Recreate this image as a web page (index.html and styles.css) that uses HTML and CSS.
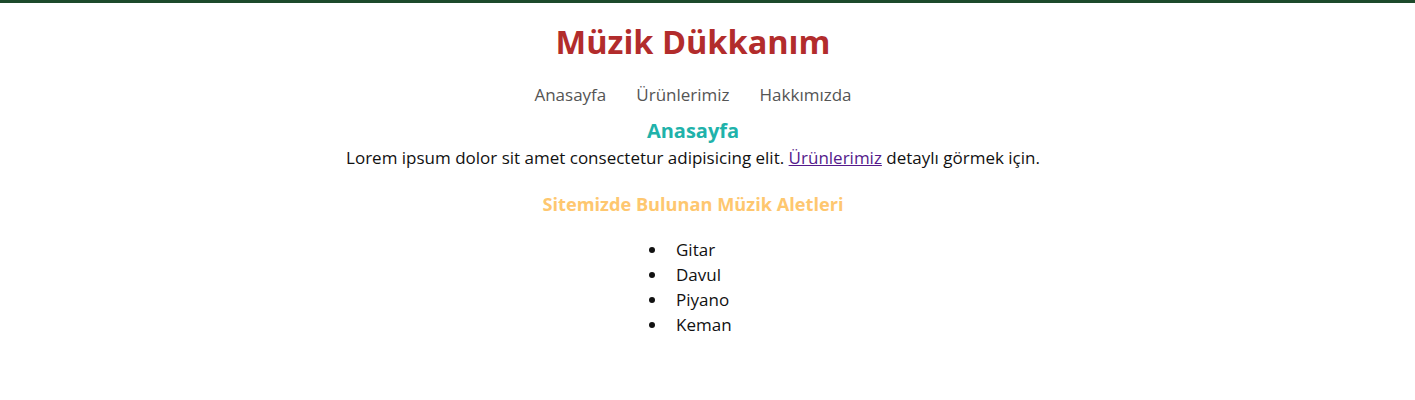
FILE: index.html
```html
<!DOCTYPE html>
<html lang="tr">
<head>
<meta charset="utf-8">
<title>Müzik Dükkanım</title>
<link rel="stylesheet" href="styles.css">
</head>
<body>
<div class="page">
<header class="site-header">
  <h1 class="site-title">Müzik Dükkanım</h1>
  <nav class="main-nav">
    <a class="nav-link" href="#">Anasayfa</a>
    <a class="nav-link" href="#">Ürünlerimiz</a>
    <a class="nav-link" href="#">Hakkımızda</a>
  </nav>
</header>
<main class="content">
  <h2 class="page-title">Anasayfa</h2>
  <p class="intro">Lorem ipsum dolor sit amet consectetur adipisicing elit. <a class="inline-link" href="#">Ürünlerimiz</a> detaylı görmek için.</p>
  <h3 class="section-title">Sitemizde Bulunan Müzik Aletleri</h3>
  <ul class="instrument-list">
    <li class="instrument">Gitar</li>
    <li class="instrument">Davul</li>
    <li class="instrument">Piyano</li>
    <li class="instrument">Keman</li>
  </ul>
</main>
</div>
</body>
</html>
```

FILE: styles.css
```css
html, body {
  margin: 0;
  padding: 0;
  background: #ffffff;
}
body {
  border-top: 3px solid #1d4a2b;
  font-family: "Open Sans", "DejaVu Sans", sans-serif;
  color: #111;
  font-size: 17px;
}
.page {
  padding-right: 29px;
}
.site-header {
  display: flex;
  flex-direction: column;
  align-items: center;
}
.site-title {
  margin: 15px 0 0;
  font-size: 32.5px;
  line-height: 48px;
  font-weight: 700;
  color: #b22c2c;
}
.main-nav {
  display: flex;
  gap: 30px;
  margin-top: 17px;
}
.nav-link {
  color: #555;
  text-decoration: none;
  font-size: 17px;
  line-height: 24px;
}
.content {
  display: flex;
  flex-direction: column;
  align-items: center;
}
.page-title {
  margin: 12px 0 0;
  font-size: 20px;
  line-height: 24px;
  font-weight: 700;
  color: #20b2aa;
}
.intro {
  margin: 3px 0 0;
  font-size: 17px;
  line-height: 24px;
}
.inline-link {
  color: #551a8b;
}
.section-title {
  margin: 22px 0 0;
  font-size: 18.2px;
  line-height: 24px;
  font-weight: 700;
  color: #fec76f;
}
.instrument-list {
  box-sizing: border-box;
  width: 130px;
  margin: 21px 0 0;
  padding: 0 0 0 40px;
  font-size: 17px;
  line-height: 25px;
}
.instrument {
  padding-left: 8px;
}
```
